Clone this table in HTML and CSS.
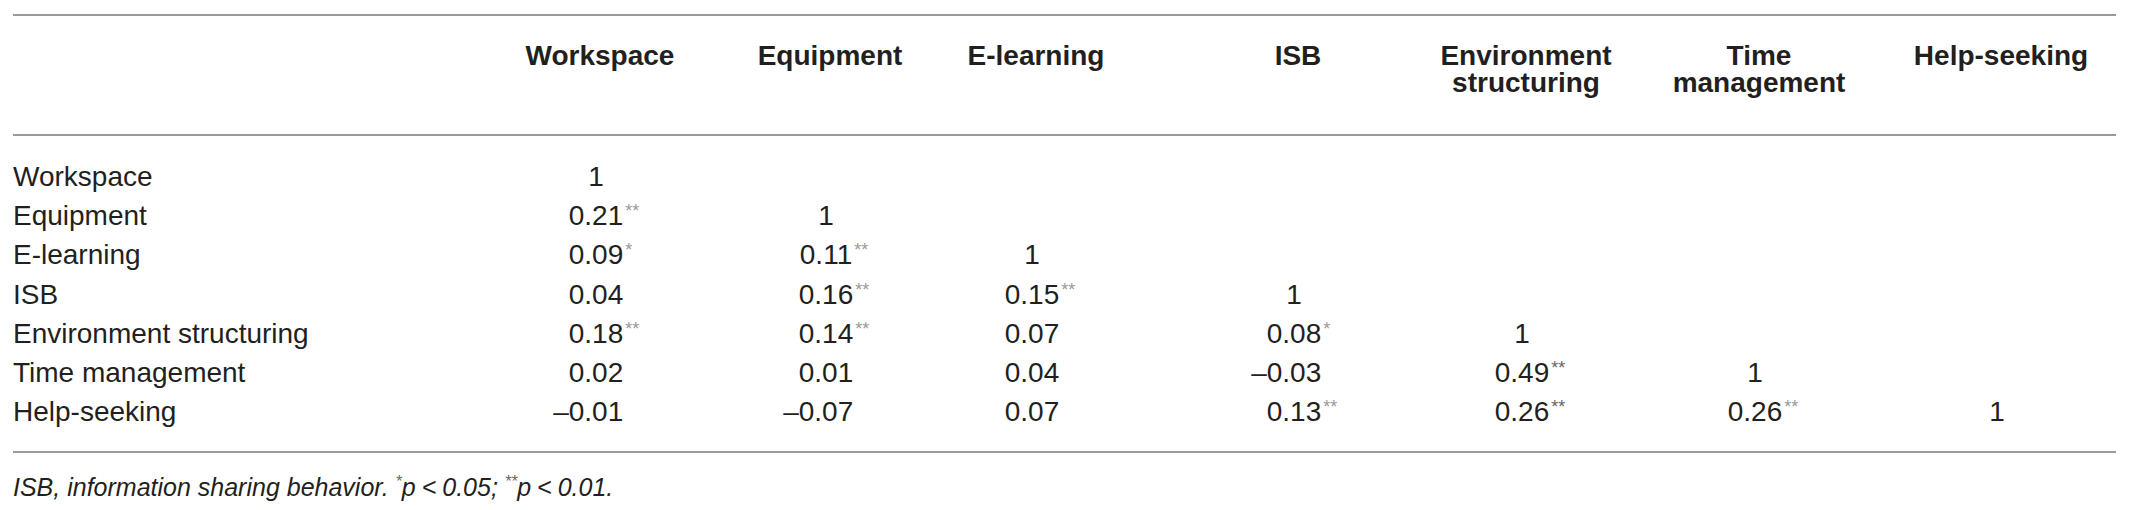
FILE: index.html
```html
<!DOCTYPE html>
<html lang="en">
<head>
<meta charset="utf-8">
<title>Correlation table</title>
<link rel="stylesheet" href="styles.css">
</head>
<body>
<div class="table">
  <div class="row head">
    <div class="cell label"></div>
    <div class="cell h">Workspace</div>
    <div class="cell h">Equipment</div>
    <div class="cell h">E-learning</div>
    <div class="cell h">ISB</div>
    <div class="cell h">Environment<br>structuring</div>
    <div class="cell h">Time<br>management</div>
    <div class="cell h">Help-seeking</div>
  </div>
  <div class="tbody">
    <div class="row">
      <div class="cell label">Workspace</div>
      <div class="cell v"><span class="num">1</span></div>
      <div class="cell v"></div><div class="cell v"></div><div class="cell v"></div><div class="cell v"></div><div class="cell v"></div><div class="cell v"></div>
    </div>
    <div class="row">
      <div class="cell label">Equipment</div>
      <div class="cell v"><span class="num">0.21<sup>**</sup></span></div>
      <div class="cell v"><span class="num">1</span></div>
      <div class="cell v"></div><div class="cell v"></div><div class="cell v"></div><div class="cell v"></div><div class="cell v"></div>
    </div>
    <div class="row">
      <div class="cell label">E-learning</div>
      <div class="cell v"><span class="num">0.09<sup>*</sup></span></div>
      <div class="cell v"><span class="num">0.11<sup>**</sup></span></div>
      <div class="cell v"><span class="num">1</span></div>
      <div class="cell v"></div><div class="cell v"></div><div class="cell v"></div><div class="cell v"></div>
    </div>
    <div class="row">
      <div class="cell label">ISB</div>
      <div class="cell v"><span class="num">0.04</span></div>
      <div class="cell v"><span class="num">0.16<sup>**</sup></span></div>
      <div class="cell v"><span class="num">0.15<sup>**</sup></span></div>
      <div class="cell v"><span class="num">1</span></div>
      <div class="cell v"></div><div class="cell v"></div><div class="cell v"></div>
    </div>
    <div class="row">
      <div class="cell label">Environment structuring</div>
      <div class="cell v"><span class="num">0.18<sup>**</sup></span></div>
      <div class="cell v"><span class="num">0.14<sup>**</sup></span></div>
      <div class="cell v"><span class="num">0.07</span></div>
      <div class="cell v"><span class="num">0.08<sup>*</sup></span></div>
      <div class="cell v"><span class="num">1</span></div>
      <div class="cell v"></div><div class="cell v"></div>
    </div>
    <div class="row">
      <div class="cell label">Time management</div>
      <div class="cell v"><span class="num">0.02</span></div>
      <div class="cell v"><span class="num">0.01</span></div>
      <div class="cell v"><span class="num">0.04</span></div>
      <div class="cell v"><span class="num"><span class="minus">–</span>0.03</span></div>
      <div class="cell v"><span class="num">0.49<sup class="dark">**</sup></span></div>
      <div class="cell v"><span class="num">1</span></div>
      <div class="cell v"></div>
    </div>
    <div class="row">
      <div class="cell label">Help-seeking</div>
      <div class="cell v"><span class="num"><span class="minus">–</span>0.01</span></div>
      <div class="cell v"><span class="num"><span class="minus">–</span>0.07</span></div>
      <div class="cell v"><span class="num">0.07</span></div>
      <div class="cell v"><span class="num">0.13<sup>**</sup></span></div>
      <div class="cell v"><span class="num">0.26<sup class="dark">**</sup></span></div>
      <div class="cell v"><span class="num">0.26<sup>**</sup></span></div>
      <div class="cell v"><span class="num">1</span></div>
    </div>
  </div>
</div>
<p class="note">ISB, information sharing behavior. <sup>*</sup>p<span class="thin"> &lt; </span>0.05; <sup>**</sup>p<span class="thin"> &lt; </span>0.01.</p>
</body>
</html>
```
FILE: styles.css
```css
html, body {
  background: #ffffff;
}
body {
  margin: 0;
  padding: 0 13px;
  font-family: "Liberation Sans", Arial, Helvetica, sans-serif;
  color: #231f20;
}
.table {
  margin-top: 14px;
  border-top: 2px solid #9a9a9a;
  border-bottom: 2px solid #9a9a9a;
}
.row {
  display: grid;
  grid-template-columns: 475px 224px 236px 228px 244px 212px 254px 230px;
  font-size: 28px;
  line-height: 39.2px;
}
.head {
  padding: 26px 0 38px;
  border-bottom: 2px solid #9a9a9a;
  font-weight: 700;
  line-height: 27px;
}
.tbody {
  padding: 21px 0 20px;
}
.cell.label {
  text-align: left;
}
.cell.h {
  text-align: center;
}
.cell.v {
  text-align: center;
  padding-right: 8px;
}
.row > .cell.h:nth-child(4) {
  padding-right: 52px;
}
.row > .cell.v:nth-child(4) {
  padding-right: 60px;
}
.num {
  position: relative;
  display: inline-block;
}
.num sup {
  position: absolute;
  left: 100%;
  top: 6px;
  margin-left: 2px;
  font-size: 18px;
  line-height: 1;
  color: #9a9a9a;
}
.num sup.dark {
  color: #666;
}
.minus {
  position: absolute;
  right: 100%;
}
.note {
  margin: 18px 0 0;
  font-style: italic;
  font-size: 25px;
  line-height: 32px;
}
.note sup {
  font-size: 16px;
  line-height: 0;
  color: #666;
}
.note .thin {
  word-spacing: -1px;
}
```
